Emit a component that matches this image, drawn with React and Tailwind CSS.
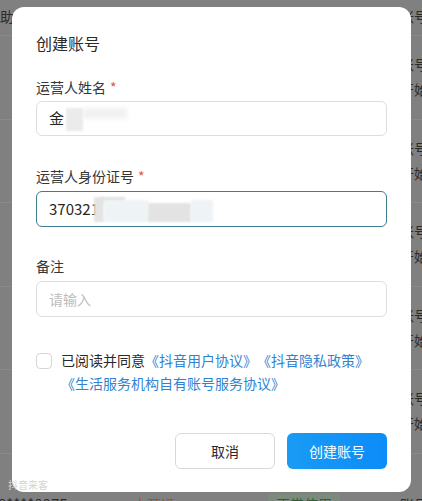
import React from "react"

const rows = [0, 1, 2, 3, 4]

const Backdrop = () => (
  <div className="flex flex-col text-[14px] leading-[20px] text-[#2b2b2b]">
    {/* header strip */}
    <div className="flex h-[35px] items-start justify-between pt-[6px]">
      <span>助手</span>
      <span className="mr-[-6px]">账号</span>
    </div>
    {rows.map((r) => (
      <div
        key={r}
        className="flex h-[83.5px] flex-col items-end border-t border-[#8a8a8a] pt-[18px]"
      >
        <span className="mr-[-6px]">账号</span>
        <span className="mr-[-6px] mt-[5px]">开始</span>
      </div>
    ))}
    <div className="flex h-[60px] items-start border-t border-[#8a8a8a] pt-[40px]">
      <span className="ml-[-2px] w-[131px] text-[15px]">8****0975</span>
      <span className="w-[139px] px-[4px] text-[#9a5428]">未开通</span>
      <span className="bg-[#7b8a7d] px-[8px] text-[#2e5e36]">正常使用</span>
      <span className="ml-auto mr-[-6px]">账号</span>
    </div>
  </div>
)

const Label = ({ text, required }) => (
  <div className="text-[14px] leading-[20px] text-[#363636]">
    {text}
    {required && <span className="ml-[4px] text-[#e0573f]">*</span>}
  </div>
)

export default function App() {
  return (
    <div className="relative h-[501px] w-[422px] overflow-hidden bg-[#808080] font-['Noto_Sans_CJK_SC','Microsoft_YaHei',sans-serif]">
      <Backdrop />

      {/* Modal */}
      <div className="absolute left-[12px] top-[7px] flex h-[485px] w-[399px] flex-col rounded-[12px] bg-white px-[24px] pt-[25px]">
        <h2 className="text-[16px] font-normal leading-[22px] text-[#2a2a2a]">创建账号</h2>

        <div className="mt-[23px]">
          <Label text="运营人姓名" required />
        </div>
        <div className="relative mt-[4px] flex h-[35px] items-center rounded-[6px] border border-[#dedede] px-[12px] text-[15px] text-[#262626]">
          金
          {/* redacted */}
          <div className="absolute left-[29px] top-[6px] h-[23px] w-[17px] bg-[#ebebeb] blur-[1px]" />
          <div className="absolute left-[46px] top-[6px] h-[11px] w-[44px] bg-[#f1f1f1] blur-[2px]" />
        </div>

        <div className="mt-[30px]">
          <Label text="运营人身份证号" required />
        </div>
        <div className="relative mt-[5px] flex h-[36px] items-center rounded-[6px] border border-[#3c7d8f] px-[12px] text-[15px] text-[#262626]">
          370321
          {/* redacted */}
          <div className="absolute left-[57px] top-[5px] h-[25px] w-[10px] bg-[#e4e4e4] blur-[1px]" />
          <div className="absolute left-[64px] top-[5px] h-[5px] w-[24px] bg-[#e2e2e2] blur-[1px]" />
          <div className="absolute left-[67px] top-[8px] h-[22px] w-[44px] bg-[#eef4f6] blur-[1px]" />
          <div className="absolute left-[111px] top-[11px] h-[19px] w-[43px] bg-[#e3e3e3] blur-[1px]" />
          <div className="absolute left-[154px] top-[8px] h-[22px] w-[22px] bg-[#eef3f5] blur-[1px]" />
        </div>

        <div className="mt-[29px]">
          <Label text="备注" />
        </div>
        <div className="mt-[5px] flex h-[36px] items-center rounded-[6px] border border-[#dedede] px-[12px] text-[14px] text-[#bdbdbd]">
          请输入
        </div>

        <div className="mt-[32px] flex items-start gap-[9px] text-[14px] leading-[23px] [text-spacing-trim:space-all]">
          <div className="mt-[4px] h-[16px] w-[16px] shrink-0 rounded-[4px] border border-[#d6d6d6] bg-white" />
          <div>
            <div>
              <span className="text-[#2a2a2a]">已阅读并同意</span>
              <span className="text-[#2f83d2]">《抖音用户协议》《抖音隐私政策》</span>
            </div>
            <div className="text-[#2f83d2]">《生活服务机构自有账号服务协议》</div>
          </div>
        </div>

        <div className="mt-[38px] flex justify-end gap-[12px]">
          <button className="h-[36px] w-[100px] rounded-[6px] border border-[#d9d9d9] bg-white text-[14px] text-[#2a2a2a]">
            取消
          </button>
          <button className="h-[36px] w-[100px] rounded-[6px] bg-gradient-to-r from-[#1a9bf4] to-[#0b8cf8] text-[14px] text-white">
            创建账号
          </button>
        </div>
      </div>

      {/* platform watermark */}
      <div className="absolute left-[8px] top-[479px] text-[10px] leading-[12px] text-[#d4d4d4]">
        抖音来客
      </div>
    </div>
  )
}
